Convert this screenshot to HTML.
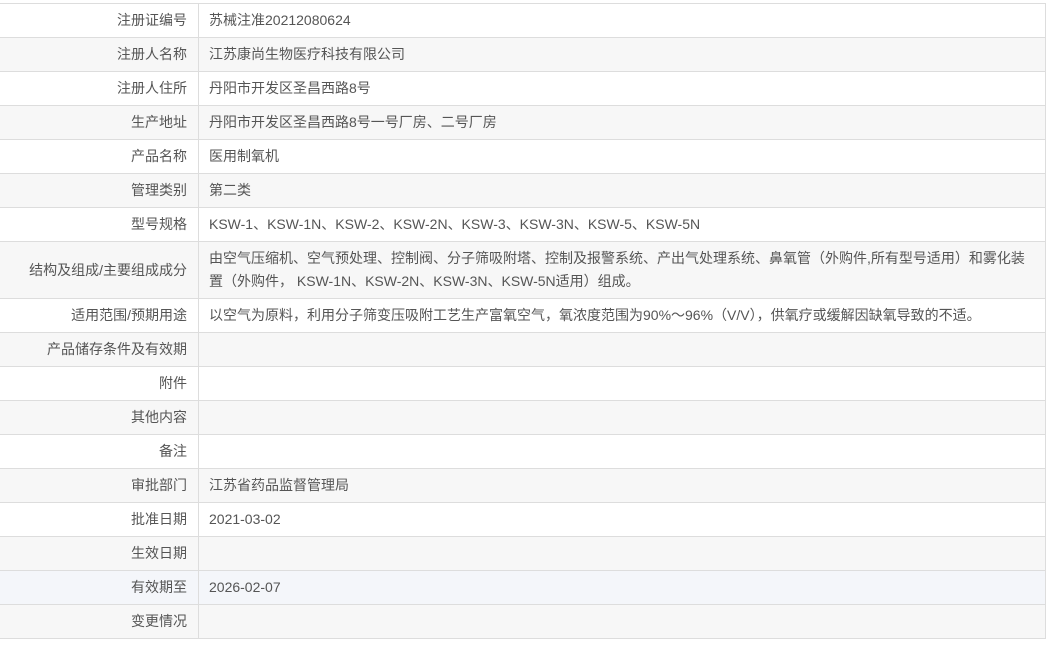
<!DOCTYPE html>
<html><head><meta charset="utf-8"><style>
body{margin:0;background:#fff;font-family:"Liberation Sans","Noto Sans CJK SC",sans-serif;font-size:14px;color:#555;}
table{position:absolute;left:0;top:3px;width:1046px;border-collapse:collapse;table-layout:fixed;}
td{border:1px solid #ddd;height:33px;padding:0 10px;line-height:23px;vertical-align:middle;white-space:nowrap;overflow:hidden;}
td:first-child{border-left:none;width:177px;text-align:right;padding-right:11px;}
tr:nth-child(even) td{background:#f7f7f7}
tr.h td{background:#f4f6fa}
tr.t td{height:56px}
</style></head><body>
<table>
<tr><td>注册证编号</td><td>苏械注准20212080624</td></tr>
<tr><td>注册人名称</td><td>江苏康尚生物医疗科技有限公司</td></tr>
<tr><td>注册人住所</td><td>丹阳市开发区圣昌西路8号</td></tr>
<tr><td>生产地址</td><td>丹阳市开发区圣昌西路8号一号厂房、二号厂房</td></tr>
<tr><td>产品名称</td><td>医用制氧机</td></tr>
<tr><td>管理类别</td><td>第二类</td></tr>
<tr><td>型号规格</td><td>KSW-1、KSW-1N、KSW-2、KSW-2N、KSW-3、KSW-3N、KSW-5、KSW-5N</td></tr>
<tr class="t"><td>结构及组成/主要组成成分</td><td>由空气压缩机、空气预处理、控制阀、分子筛吸附塔、控制及报警系统、产出气处理系统、鼻氧管（外购件,所有型号适用）和雾化装<br>置（外购件， KSW-1N、KSW-2N、KSW-3N、KSW-5N适用）组成。</td></tr>
<tr><td>适用范围/预期用途</td><td>以空气为原料，利用分子筛变压吸附工艺生产富氧空气，氧浓度范围为90%～96%（V/V），供氧疗或缓解因缺氧导致的不适。</td></tr>
<tr><td>产品储存条件及有效期</td><td></td></tr>
<tr><td>附件</td><td></td></tr>
<tr><td>其他内容</td><td></td></tr>
<tr><td>备注</td><td></td></tr>
<tr><td>审批部门</td><td>江苏省药品监督管理局</td></tr>
<tr><td>批准日期</td><td>2021-03-02</td></tr>
<tr><td>生效日期</td><td></td></tr>
<tr class="h"><td>有效期至</td><td>2026-02-07</td></tr>
<tr><td>变更情况</td><td></td></tr>
</table>
</body></html>
